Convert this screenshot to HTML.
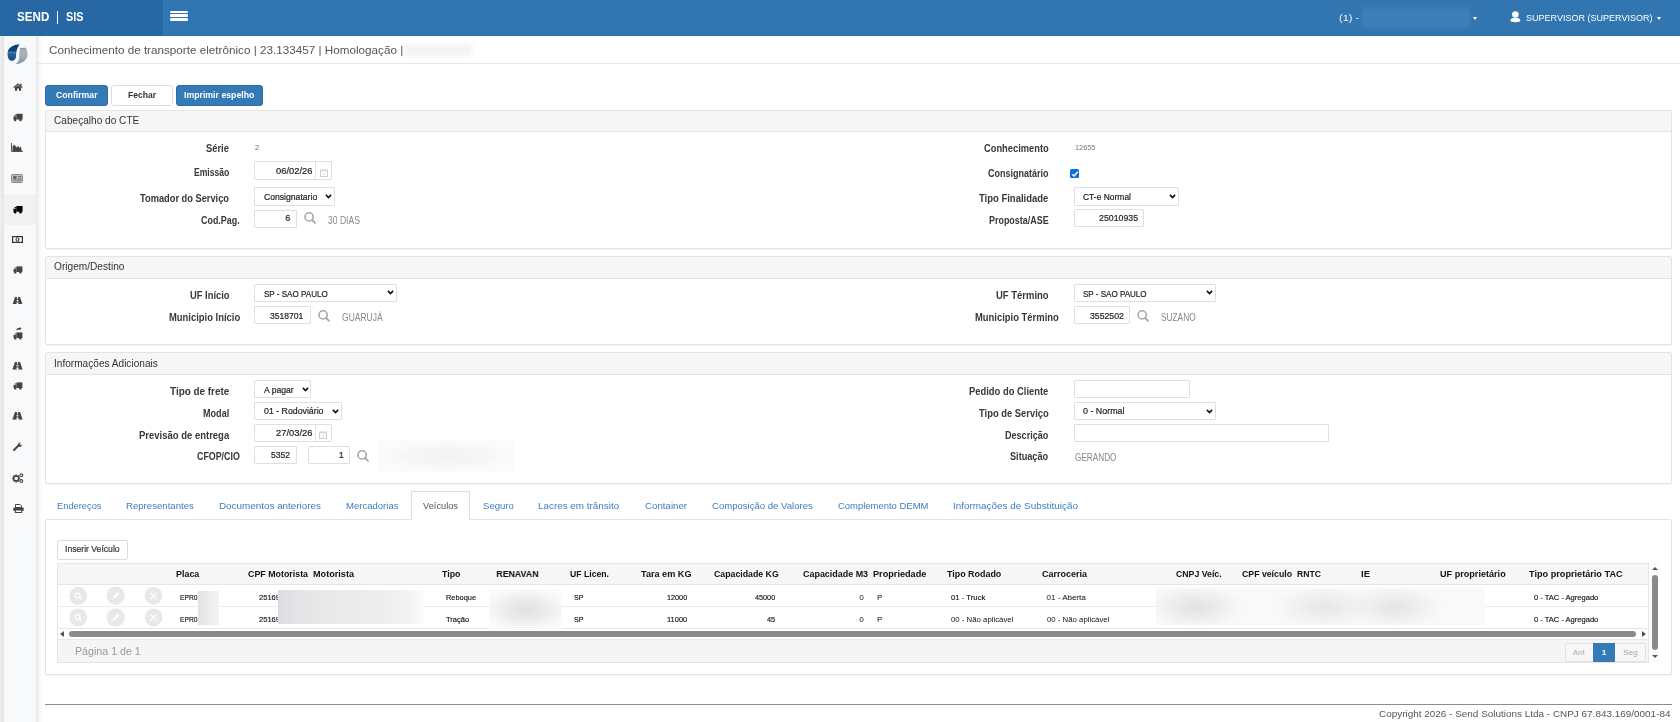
<!DOCTYPE html>
<html><head><meta charset="utf-8"><title>CT-e</title>
<style>
html,body{margin:0;padding:0;width:1680px;height:722px;overflow:hidden;background:#fff;font-family:"Liberation Sans",sans-serif;}
body{position:relative;}
.t{position:absolute;white-space:nowrap;line-height:1;transform-origin:0 0;}
.a{position:absolute;box-sizing:border-box;}
.hdrL{left:0;top:0;width:163px;height:36px;background:#2767a4;}
.hdrR{left:163px;top:0;width:1517px;height:36px;background:#3276b1;}
.sideStrip{left:0;top:36px;width:4px;height:686px;background:linear-gradient(to right,#f0f0f0,#e3e3e3);}
.side{left:4px;top:36px;width:32px;height:686px;background:#f8f9fb;}
.sideSh{left:36px;top:36px;width:8px;height:686px;background:linear-gradient(to right,#e4e4e4,#f3f3f3 25%,#fbfbfb 60%,rgba(255,255,255,0));}
.titlebar{left:36px;top:36px;width:1644px;height:28px;background:#fff;border-bottom:1px solid #e8e8e8;}
.btnP{background:#337ab7;border:1px solid #2e6da4;border-radius:3px;}
.btnD{background:#fff;border:1px solid #ddd;border-radius:3px;}
.panel{border:1px solid #e3e3e3;background:#fff;border-radius:2px;box-shadow:0 1px 1px rgba(0,0,0,.04);}
.ph{background:#f6f6f6;border-bottom:1px solid #e3e3e3;}
.inp{background:#fff;border:1px solid #dfdfdf;border-radius:1px;}
.sel{background:#fff;border:1px solid #dfdfdf;border-radius:1px;}
.chev{position:absolute;width:5px;height:5px;border-right:1.6px solid #222;border-bottom:1.6px solid #222;transform:rotate(45deg);}
.hdrS{left:0;top:36px;width:1680px;height:2px;background:linear-gradient(rgba(40,80,130,.12),rgba(40,80,130,0));}

</style></head><body>
<svg width="0" height="0" style="position:absolute">
<defs>
<symbol id="srch" viewBox="0 0 12 12"><circle cx="5.1" cy="4.9" r="4.1" stroke="#aaa6aa" stroke-width="1.6" fill="none"/><path d="M8.1 8 L11 10.9" stroke="#aaa6aa" stroke-width="1.8" stroke-linecap="round"/></symbol>
<symbol id="chev" viewBox="0 0 7 5"><path d="M0.9 0.9 L3.5 3.6 L6.1 0.9" stroke="#111" stroke-width="1.6" fill="none"/></symbol>
<symbol id="cal" viewBox="0 0 8 8"><rect x="0.5" y="1.3" width="7" height="6.2" stroke="#cfcfcf" stroke-width="1" fill="none"/><rect x="0.5" y="0.6" width="7" height="1.8" fill="#d6d6d6"/><rect x="3.3" y="4" width="1.4" height="1.4" fill="#d6d6d6"/></symbol>
<symbol id="truck" viewBox="0 0 12 10"><path d="M4 0.5 H11.5 V7.5 H4 Z" /><path d="M0.5 4 L2 1.8 H4 V7.5 H0.5 Z"/><circle cx="2.5" cy="8" r="1.5"/><circle cx="9" cy="8" r="1.5"/><rect x="1.3" y="2.6" width="1.6" height="1.3" fill="#f9fafb"/></symbol>
<symbol id="road" viewBox="0 0 12 9"><path d="M3 0 H5.3 V2 H6.7 V0 H9 L12 9 H7.2 V6.5 H4.8 V9 H0 Z M5 3.2 V5.3 H7 V3.2 Z"/></symbol>
</defs>
</svg>
<div class="a hdrL"></div>
<div class="a hdrR"></div>
<div class="a hdrS"></div>
<div class="a" style="left:56.6px;top:11.2px;width:1.8px;height:12.6px;background:#fff"></div>
<!-- hamburger -->
<div class="a" style="left:170px;top:10.5px;width:18px;height:2.6px;background:#fff;border-radius:1px"></div>
<div class="a" style="left:170px;top:14.3px;width:18px;height:2.6px;background:#fff;border-radius:1px"></div>
<div class="a" style="left:170px;top:18.1px;width:18px;height:2.6px;background:#fff;border-radius:1px"></div>
<!-- header blurred box -->
<div class="a" style="left:1362px;top:8px;width:108px;height:20px;background:#3f7fb8;filter:blur(2px)"></div>
<div class="a" style="left:1472.5px;top:17px;width:0;height:0;border-left:2.5px solid transparent;border-right:2.5px solid transparent;border-top:3px solid #fff"></div>
<div class="a" style="left:1656.8px;top:17px;width:0;height:0;border-left:2.6px solid transparent;border-right:2.6px solid transparent;border-top:3px solid #fff"></div>
<!-- user icon -->
<svg class="a" style="left:1509px;top:11px" width="13" height="12" viewBox="0 0 13 12"><circle cx="6.4" cy="3.5" r="3.3" fill="#fff"/><path d="M1.4 9.6 C1.4 7.6 3.5 7 6.4 7 C9.3 7 11.4 7.6 11.4 9.6 C11.4 10.9 9.5 11.2 6.4 11.2 C3.3 11.2 1.4 10.9 1.4 9.6 Z" fill="#fff"/></svg>

<!-- sidebar -->
<div class="a sideStrip"></div>
<div class="a side"></div>
<div class="a" style="left:4px;top:193.5px;width:32px;height:31px;background:#f2f2f2"></div>

<!-- title bar -->
<div class="a titlebar"></div>
<div class="a" style="left:404px;top:44px;width:68px;height:12px;background:#f3f3f3;filter:blur(2px)"></div>

<div class="a sideSh"></div>
<div class="a" style="left:36px;top:63px;width:9px;height:1px;background:#e6e6e6"></div>
<!-- buttons -->
<div class="a btnP" style="left:45px;top:84.5px;width:63px;height:21.5px"></div>
<div class="a btnD" style="left:110.5px;top:84.5px;width:62.5px;height:21.5px"></div>
<div class="a btnP" style="left:176px;top:84.5px;width:86.5px;height:21.5px"></div>

<!-- panel 1 -->
<div class="a panel" style="left:45px;top:110px;width:1627px;height:139px"></div>
<div class="a ph" style="left:46px;top:111px;width:1625px;height:21px"></div>
<!-- panel 2 -->
<div class="a panel" style="left:45px;top:256px;width:1627px;height:89px"></div>
<div class="a ph" style="left:46px;top:257px;width:1625px;height:22px"></div>
<!-- panel 3 -->
<div class="a panel" style="left:45px;top:352px;width:1627px;height:132px"></div>
<div class="a ph" style="left:46px;top:353px;width:1625px;height:22px"></div>

<!-- panel1 inputs -->
<div class="a inp" style="left:254px;top:161px;width:78px;height:19px"></div>
<div class="a" style="left:314.5px;top:162px;width:1px;height:17px;background:#e2e2e2"></div>
<div class="a sel" style="left:254px;top:187px;width:80.5px;height:18.5px"></div>
<div class="a inp" style="left:254px;top:209.5px;width:42.5px;height:18px"></div>
<div class="a sel" style="left:1074px;top:187px;width:104.5px;height:18.5px"></div>
<div class="a inp" style="left:1074px;top:209px;width:70px;height:18px"></div>
<!-- checkbox -->
<div class="a" style="left:1070px;top:169px;width:9.2px;height:9.3px;background:#0b6fd6;border-radius:1.5px"></div>
<svg class="a" style="left:1070px;top:169px" width="10" height="10" viewBox="0 0 10 10"><path d="M2.2 5.2 L4.1 7 L7.8 2.8" stroke="#fff" stroke-width="1.4" fill="none"/></svg>

<!-- panel2 inputs -->
<div class="a sel" style="left:254px;top:284px;width:143px;height:17.5px"></div>
<div class="a inp" style="left:254px;top:306px;width:57px;height:18px"></div>
<div class="a sel" style="left:1074px;top:284px;width:142px;height:17.5px"></div>
<div class="a inp" style="left:1074px;top:306px;width:56px;height:18px"></div>

<!-- panel3 inputs -->
<div class="a sel" style="left:254px;top:380px;width:57px;height:18px"></div>
<div class="a sel" style="left:254px;top:401.5px;width:87.5px;height:18px"></div>
<div class="a inp" style="left:254px;top:423.5px;width:77.5px;height:18px"></div>
<div class="a" style="left:314.5px;top:424.5px;width:1px;height:16px;background:#e2e2e2"></div>
<div class="a inp" style="left:254px;top:445.5px;width:43px;height:18px"></div>
<div class="a inp" style="left:308px;top:445.5px;width:42px;height:18px"></div>
<div class="a" style="left:378px;top:440px;width:137px;height:32px;background:radial-gradient(ellipse 50% 45% at 50% 50%,#f3f3f3,#f6f6f6 60%,#fbfbfb 100%)"></div>
<div class="a inp" style="left:1074px;top:380px;width:116px;height:18px"></div>
<div class="a sel" style="left:1074px;top:401.5px;width:141.5px;height:18px"></div>
<div class="a inp" style="left:1074px;top:423.5px;width:255px;height:18px"></div>

<!-- tabs -->
<div class="a" style="left:411px;top:491px;width:59px;height:29px;background:#fff;border:1px solid #ddd;border-bottom:none"></div>
<div class="a panel" style="left:45px;top:519px;width:1627px;height:156px;border-color:#e3e3e3"></div>
<div class="a" style="left:412px;top:518px;width:57px;height:2px;background:#fff"></div>

<!-- inserir -->
<div class="a btnD" style="left:57px;top:539.5px;width:70.5px;height:20px;border-color:#dcdcdc;border-radius:2px"></div>

<!-- grid -->
<div class="a" style="left:57px;top:563px;width:1592px;height:100px;border:1px solid #e5e5e5;background:#fff"></div>
<div class="a" style="left:58px;top:564px;width:1590px;height:20.5px;background:#f6f6f6;border-bottom:1px solid #e5e5e5"></div>
<div class="a" style="left:58px;top:606px;width:1590px;height:1px;background:#ececec"></div>
<div class="a" style="left:58px;top:628px;width:1590px;height:1px;background:#e5e5e5"></div>
<!-- h scrollbar -->
<div class="a" style="left:58px;top:629px;width:1590px;height:9px;background:#fff"></div>
<div class="a" style="left:68.6px;top:631px;width:1567.4px;height:6px;background:#8a8a8a;border-radius:3px"></div>
<div class="a" style="left:60px;top:631px;width:0;height:0;border-top:3px solid transparent;border-bottom:3px solid transparent;border-right:4px solid #555"></div>
<div class="a" style="left:1641.5px;top:631px;width:0;height:0;border-top:3px solid transparent;border-bottom:3px solid transparent;border-left:4px solid #555"></div>
<!-- pager -->
<div class="a" style="left:58px;top:638.5px;width:1590px;height:24.5px;background:#f5f5f5;border-top:1px solid #e8e8e8;border-bottom:1px solid #e3e3e3"></div>
<div class="a" style="left:1564.5px;top:643px;width:81px;height:18.6px;border:1px solid #e3e3e3;border-radius:2px;background:#f7f7f7"></div>
<div class="a" style="left:1593px;top:643px;width:22.2px;height:18.6px;background:#337ab7"></div>
<!-- v scrollbar -->
<div class="a" style="left:1650px;top:563px;width:9px;height:100px;background:#fbfbfb"></div>
<div class="a" style="left:1651.8px;top:574.6px;width:6px;height:75.4px;background:#8a8a8a;border-radius:3px"></div>
<div class="a" style="left:1651.8px;top:566.5px;width:0;height:0;border-left:3px solid transparent;border-right:3px solid transparent;border-bottom:3.8px solid #555"></div>
<div class="a" style="left:1651.8px;top:655px;width:0;height:0;border-left:3px solid transparent;border-right:3px solid transparent;border-top:3.8px solid #555"></div>

<!-- footer -->
<div class="a" style="left:45px;top:704px;width:1627px;height:1px;background:#8d8d8d"></div>
<!-- logo -->
<svg class="a" style="left:6px;top:42.5px" width="23" height="22" viewBox="0 0 23 22">
<defs>
<linearGradient id="lgB" x1="0" y1="0" x2="0" y2="1"><stop offset="0" stop-color="#023b72"/><stop offset="0.4" stop-color="#0d4a85"/><stop offset="0.5" stop-color="#4a77a3"/><stop offset="0.6" stop-color="#2b6198"/><stop offset="1" stop-color="#0b4f8d"/></linearGradient>
<linearGradient id="lgG" x1="0" y1="0" x2="0" y2="1"><stop offset="0" stop-color="#7b8893"/><stop offset="0.12" stop-color="#a9b5bd"/><stop offset="0.6" stop-color="#a2aeb7"/><stop offset="1" stop-color="#7e8e9a"/></linearGradient>
</defs>
<path d="M13.5 1.2 C8 1.5 1.5 4.5 1.5 10.5 C1.5 15 3 17.8 6 17.8 C8 17.8 9.8 16.5 10 13.8 C10.2 10 10.3 6 13.5 1.2 Z" fill="url(#lgB)"/>
<path d="M14 5 L19.5 4.8 C21 6.5 21.5 9 21.5 11.5 C21.5 17 16 21 9.6 20.9 C12 19.5 13 17.5 13.2 15 C13.4 11.5 13.4 8 14 5 Z" fill="url(#lgG)"/>
</svg>
<!-- sidebar icons -->
<svg class="a" style="left:13px;top:83px" width="10" height="8" viewBox="0 0 10 8"><path d="M5 0.2 L9.8 4.3 L8.9 5.1 L5 1.8 L1.1 5.1 L0.2 4.3 Z" fill="#444"/><path d="M1.9 4.6 L5 2.2 L8.1 4.6 V7.8 H5.9 V5.6 H4.1 V7.8 H1.9 Z" fill="#444"/><rect x="7.2" y="0.6" width="1.3" height="2.4" fill="#444"/></svg>
<svg class="a" style="left:12.8px;top:113.2px;fill:#444" width="10" height="9"><use href="#truck"/></svg>
<svg class="a" style="left:11px;top:143px" width="12" height="9" viewBox="0 0 12 9"><path d="M0.5 0 V8.5 H11.8" stroke="#555" stroke-width="1" fill="none"/><path d="M1.5 8 V3.5 L3.2 1.5 L5.5 4.5 L7.2 3 L8.8 5 L9.8 3.2 L10.8 8 Z" fill="#444"/></svg>
<svg class="a" style="left:11px;top:174px" width="12" height="9" viewBox="0 0 12 9"><rect x="0.5" y="0.5" width="11" height="8" rx="1" fill="#bdbdbd" stroke="#777" stroke-width="0.8"/><rect x="2.3" y="2" width="3.2" height="3.5" fill="#666"/><rect x="6.8" y="2" width="3.5" height="1.3" fill="#777"/><rect x="6.8" y="4.5" width="3.5" height="1.3" fill="#777"/><rect x="2.3" y="6.3" width="8" height="1" fill="#888"/></svg>
<svg class="a" style="left:12.5px;top:204.5px;fill:#000" width="10" height="9.5"><use href="#truck"/></svg>
<svg class="a" style="left:12px;top:236px" width="11" height="7" viewBox="0 0 11 7"><rect x="0.6" y="0.6" width="9.8" height="5.8" stroke="#333" stroke-width="1.2" fill="#fff"/><ellipse cx="5.5" cy="3.5" rx="2" ry="2.3" fill="#333"/><ellipse cx="5.5" cy="3.5" rx="0.8" ry="1.4" fill="#fff"/><path d="M0.6 0.6 L2 0.6 L0.6 2 Z M10.4 0.6 L9 0.6 L10.4 2 Z M0.6 6.4 L2 6.4 L0.6 5 Z M10.4 6.4 L9 6.4 L10.4 5 Z" fill="#333"/></svg>
<svg class="a" style="left:13px;top:266px;fill:#444" width="10" height="8"><use href="#truck"/></svg>
<svg class="a" style="left:12px;top:296.5px;fill:#444" width="11" height="7.5"><use href="#road"/></svg>
<svg class="a" style="left:13px;top:326.5px" width="10" height="4" viewBox="0 0 10 4"><path d="M3 3.5 C3.5 1.5 5 0.8 6.5 0.8 V0 L8.5 1.6 L6.5 3.2 V2.4 C5.3 2.4 4.2 2.8 3 3.5 Z" fill="#444"/></svg>
<svg class="a" style="left:13px;top:332px;fill:#444" width="10" height="8"><use href="#truck"/></svg>
<svg class="a" style="left:12px;top:362px;fill:#444" width="11" height="7.7"><use href="#road"/></svg>
<svg class="a" style="left:13px;top:382px;fill:#444" width="10" height="8"><use href="#truck"/></svg>
<svg class="a" style="left:12px;top:412px;fill:#444" width="11" height="7.7"><use href="#road"/></svg>
<svg class="a" style="left:12.5px;top:442px" width="10" height="9" viewBox="0 0 10 9"><path d="M1 8 L5.5 3.5" stroke="#444" stroke-width="2" stroke-linecap="round"/><path d="M5 3.8 C4.5 2 5.8 0.3 7.8 0.5 L6.6 1.9 L7.3 2.9 L8.7 2.2 C9 4 7.5 5.3 5.8 4.8 Z" fill="#444"/></svg>
<svg class="a" style="left:11.5px;top:472.5px" width="12" height="10" viewBox="0 0 12 10"><circle cx="4.2" cy="5.5" r="2.6" stroke="#444" stroke-width="1.6" fill="none"/><g stroke="#444" stroke-width="1.4"><path d="M4.2 1.6 V2.4 M4.2 8.6 V9.4 M0.3 5.5 H1.1 M7.3 5.5 H8.1 M1.5 2.8 L2.1 3.4 M6.3 7.6 L6.9 8.2 M1.5 8.2 L2.1 7.6 M6.3 3.4 L6.9 2.8"/></g><circle cx="9.3" cy="2.3" r="1.4" stroke="#444" stroke-width="1.1" fill="none"/><circle cx="9.3" cy="8" r="1.4" stroke="#444" stroke-width="1.1" fill="none"/></svg>
<svg class="a" style="left:12.5px;top:503.5px" width="11" height="9" viewBox="0 0 11 9"><path d="M2.5 0.5 H7 L8.5 2 V3.5 H2.5 Z" stroke="#444" stroke-width="1" fill="#fff"/><rect x="0.3" y="3.5" width="10.4" height="3.6" rx="1" fill="#444"/><rect x="2.3" y="6" width="6.4" height="2.5" stroke="#444" stroke-width="1" fill="#fff"/></svg>

<!-- select chevrons -->
<svg class="a" style="left:324.8px;top:193.8px" width="7" height="5"><use href="#chev"/></svg>
<svg class="a" style="left:1168.8px;top:193.8px" width="7" height="5"><use href="#chev"/></svg>
<svg class="a" style="left:386.6px;top:290.4px" width="7" height="5"><use href="#chev"/></svg>
<svg class="a" style="left:1206.2px;top:290.4px" width="7" height="5"><use href="#chev"/></svg>
<svg class="a" style="left:301.6px;top:387px" width="7" height="5"><use href="#chev"/></svg>
<svg class="a" style="left:332px;top:409px" width="7" height="5"><use href="#chev"/></svg>
<svg class="a" style="left:1205.6px;top:409px" width="7" height="5"><use href="#chev"/></svg>
<!-- search icons -->
<svg class="a" style="left:303.8px;top:212.4px" width="12" height="12"><use href="#srch"/></svg>
<svg class="a" style="left:317.8px;top:310.4px" width="12" height="12"><use href="#srch"/></svg>
<svg class="a" style="left:1137.4px;top:310.4px" width="12" height="12"><use href="#srch"/></svg>
<svg class="a" style="left:357.2px;top:449.5px" width="12" height="12"><use href="#srch"/></svg>
<!-- calendar icons -->
<svg class="a" style="left:319.5px;top:168.5px" width="8" height="8"><use href="#cal"/></svg>
<svg class="a" style="left:319.3px;top:430.8px" width="8" height="8"><use href="#cal"/></svg>

<!-- grid action circles -->
<svg class="a" style="left:60px;top:586px" width="110" height="42" viewBox="60 586 110 42">
<g fill="#e8e8e8"><circle cx="78.2" cy="595.8" r="9"/><circle cx="115.6" cy="595.8" r="9.2"/><circle cx="153.6" cy="595.8" r="8.9"/><circle cx="78.2" cy="617.5" r="9"/><circle cx="115.6" cy="617.5" r="9.2"/><circle cx="153.6" cy="617.5" r="8.9"/></g>
<g stroke="#fff" fill="none">
<circle cx="77.6" cy="595.4" r="2.4" stroke-width="1.2"/><path d="M79.4 597.3 L81.5 599.2" stroke-width="1.4"/>
<path d="M113.6 597.9 L118.6 592.9" stroke-width="2.6"/><path d="M111.6 599.9 L112.6 598.9" stroke-width="1.6"/>
<path d="M150.2 592.4 L156.8 599.1 M156.8 592.4 L150.2 599.1" stroke-width="1.3"/>
<circle cx="77.6" cy="617.1" r="2.4" stroke-width="1.2"/><path d="M79.4 619 L81.5 620.9" stroke-width="1.4"/>
<path d="M113.6 619.6 L118.6 614.6" stroke-width="2.6"/><path d="M111.6 621.6 L112.6 620.6" stroke-width="1.6"/>
<path d="M150.2 614.1 L156.8 620.8 M156.8 614.1 L150.2 620.8" stroke-width="1.3"/>
</g>
</svg>

<div class="t" style="left:16.70px;top:10.00px;font-size:13.5px;color:#fff;font-weight:700;transform:scaleX(0.8610);">SEND</div>
<div class="t" style="left:65.50px;top:10.00px;font-size:13.5px;color:#fff;font-weight:700;transform:scaleX(0.8086);">SIS</div>
<div class="t" style="left:1339.30px;top:13.00px;font-size:9.5px;color:#eef3f8;transform:scaleX(1.1652);">(1) -</div>
<div class="t" style="left:1526.00px;top:13.00px;font-size:9.5px;color:#fff;transform:scaleX(0.9496);">SUPERVISOR (SUPERVISOR)</div>
<div class="t" style="left:48.80px;top:45.00px;font-size:11px;color:#555;transform:scaleX(1.0627);">Conhecimento de transporte eletrônico | 23.133457 | Homologação |</div>
<div class="t" style="left:55.50px;top:90.00px;font-size:9.5px;color:#fff;font-weight:700;transform:scaleX(0.9162);">Confirmar</div>
<div class="t" style="left:127.70px;top:90.00px;font-size:9.5px;color:#333;font-weight:700;transform:scaleX(0.8987);">Fechar</div>
<div class="t" style="left:183.90px;top:90.00px;font-size:9.5px;color:#fff;font-weight:700;transform:scaleX(0.9195);">Imprimir espelho</div>
<div class="t" style="left:54.20px;top:116.00px;font-size:10px;color:#333;transform:scaleX(1.0095);">Cabeçalho do CTE</div>
<div class="t" style="left:54.20px;top:262.00px;font-size:10px;color:#333;transform:scaleX(1.0134);">Origem/Destino</div>
<div class="t" style="left:54.00px;top:359.00px;font-size:10px;color:#333;transform:scaleX(1.0093);">Informações Adicionais</div>
<div class="t" style="left:205.90px;top:144.00px;font-size:10px;color:#383838;font-weight:700;transform:scaleX(0.9359);">Série</div>
<div class="t" style="left:193.50px;top:168.00px;font-size:10px;color:#383838;font-weight:700;transform:scaleX(0.8580);">Emissão</div>
<div class="t" style="left:139.80px;top:194.00px;font-size:10px;color:#383838;font-weight:700;transform:scaleX(0.9275);">Tomador do Serviço</div>
<div class="t" style="left:200.50px;top:216.00px;font-size:10px;color:#383838;font-weight:700;transform:scaleX(0.8929);">Cod.Pag.</div>
<div class="t" style="left:983.50px;top:144.00px;font-size:10px;color:#383838;font-weight:700;transform:scaleX(0.9316);">Conhecimento</div>
<div class="t" style="left:987.60px;top:169.00px;font-size:10px;color:#383838;font-weight:700;transform:scaleX(0.9013);">Consignatário</div>
<div class="t" style="left:978.90px;top:194.00px;font-size:10px;color:#383838;font-weight:700;transform:scaleX(0.9473);">Tipo Finalidade</div>
<div class="t" style="left:988.60px;top:216.00px;font-size:10px;color:#383838;font-weight:700;transform:scaleX(0.8937);">Proposta/ASE</div>
<div class="t" style="left:189.50px;top:291.00px;font-size:10px;color:#383838;font-weight:700;transform:scaleX(0.9353);">UF Início</div>
<div class="t" style="left:168.60px;top:313.00px;font-size:10px;color:#383838;font-weight:700;transform:scaleX(0.9423);">Municipio Início</div>
<div class="t" style="left:995.60px;top:291.00px;font-size:10px;color:#383838;font-weight:700;transform:scaleX(0.9467);">UF Término</div>
<div class="t" style="left:975.20px;top:313.00px;font-size:10px;color:#383838;font-weight:700;transform:scaleX(0.9427);">Municipio Término</div>
<div class="t" style="left:169.50px;top:387.00px;font-size:10px;color:#383838;font-weight:700;transform:scaleX(0.9912);">Tipo de frete</div>
<div class="t" style="left:202.60px;top:409.00px;font-size:10px;color:#383838;font-weight:700;transform:scaleX(0.9069);">Modal</div>
<div class="t" style="left:138.60px;top:431.00px;font-size:10px;color:#383838;font-weight:700;transform:scaleX(0.9490);">Previsão de entrega</div>
<div class="t" style="left:196.70px;top:452.00px;font-size:10px;color:#383838;font-weight:700;transform:scaleX(0.8853);">CFOP/CIO</div>
<div class="t" style="left:969.00px;top:387.00px;font-size:10px;color:#383838;font-weight:700;transform:scaleX(0.9390);">Pedido do Cliente</div>
<div class="t" style="left:978.60px;top:409.00px;font-size:10px;color:#383838;font-weight:700;transform:scaleX(0.9381);">Tipo de Serviço</div>
<div class="t" style="left:1005.00px;top:431.00px;font-size:10px;color:#383838;font-weight:700;transform:scaleX(0.9056);">Descrição</div>
<div class="t" style="left:1010.20px;top:452.00px;font-size:10px;color:#383838;font-weight:700;transform:scaleX(0.9139);">Situação</div>
<div class="t" style="left:254.70px;top:144.00px;font-size:8px;color:#777;">2</div>
<div class="t" style="left:1074.60px;top:144.00px;font-size:8px;color:#777;transform:scaleX(0.9169);">12655</div>
<div class="t" style="left:276.00px;top:167.00px;font-size:9px;color:#1e1e1e;-webkit-text-stroke:0.2px #1e1e1e;transform:scaleX(1.0386);">06/02/26</div>
<div class="t" style="left:263.70px;top:193.00px;font-size:9px;color:#1e1e1e;-webkit-text-stroke:0.2px #1e1e1e;transform:scaleX(0.9577);">Consignatario</div>
<div class="t" style="left:285.28px;top:214.00px;font-size:9px;color:#1e1e1e;-webkit-text-stroke:0.2px #1e1e1e;">6</div>
<div class="t" style="left:327.70px;top:215.00px;font-size:11px;color:#888;transform:scaleX(0.7786);">30 DIAS</div>
<div class="t" style="left:1083.40px;top:193.00px;font-size:9px;color:#1e1e1e;-webkit-text-stroke:0.2px #1e1e1e;transform:scaleX(0.9409);">CT-e Normal</div>
<div class="t" style="left:1098.90px;top:214.00px;font-size:9px;color:#1e1e1e;-webkit-text-stroke:0.2px #1e1e1e;transform:scaleX(0.9764);">25010935</div>
<div class="t" style="left:263.50px;top:290.00px;font-size:9px;color:#1e1e1e;-webkit-text-stroke:0.2px #1e1e1e;transform:scaleX(0.8946);">SP - SAO PAULO</div>
<div class="t" style="left:270.30px;top:312.00px;font-size:9px;color:#1e1e1e;-webkit-text-stroke:0.2px #1e1e1e;transform:scaleX(0.9530);">3518701</div>
<div class="t" style="left:341.50px;top:312.00px;font-size:11px;color:#888;transform:scaleX(0.7743);">GUARUJÁ</div>
<div class="t" style="left:1083.40px;top:290.00px;font-size:9px;color:#1e1e1e;-webkit-text-stroke:0.2px #1e1e1e;transform:scaleX(0.8932);">SP - SAO PAULO</div>
<div class="t" style="left:1090.00px;top:312.00px;font-size:9px;color:#1e1e1e;-webkit-text-stroke:0.2px #1e1e1e;transform:scaleX(0.9644);">3552502</div>
<div class="t" style="left:1161.00px;top:312.00px;font-size:11px;color:#888;transform:scaleX(0.7547);">SUZANO</div>
<div class="t" style="left:263.60px;top:386.00px;font-size:9px;color:#1e1e1e;-webkit-text-stroke:0.2px #1e1e1e;transform:scaleX(0.9571);">A pagar</div>
<div class="t" style="left:263.60px;top:407.00px;font-size:9px;color:#1e1e1e;-webkit-text-stroke:0.2px #1e1e1e;transform:scaleX(0.9749);">01 - Rodoviário</div>
<div class="t" style="left:276.00px;top:429.00px;font-size:9px;color:#1e1e1e;-webkit-text-stroke:0.2px #1e1e1e;transform:scaleX(1.0386);">27/03/26</div>
<div class="t" style="left:271.20px;top:451.00px;font-size:9px;color:#1e1e1e;-webkit-text-stroke:0.2px #1e1e1e;transform:scaleX(0.9485);">5352</div>
<div class="t" style="left:338.78px;top:451.00px;font-size:9px;color:#1e1e1e;-webkit-text-stroke:0.2px #1e1e1e;">1</div>
<div class="t" style="left:1083.30px;top:407.00px;font-size:9px;color:#1e1e1e;-webkit-text-stroke:0.2px #1e1e1e;transform:scaleX(0.9877);">0 - Normal</div>
<div class="t" style="left:1074.50px;top:452.00px;font-size:11px;color:#888;transform:scaleX(0.7461);">GERANDO</div>
<div class="t" style="left:57.00px;top:502.00px;font-size:9px;color:#3d7ebf;transform:scaleX(1.0341);">Endereços</div>
<div class="t" style="left:126.40px;top:502.00px;font-size:9px;color:#3d7ebf;transform:scaleX(1.0669);">Representantes</div>
<div class="t" style="left:218.70px;top:502.00px;font-size:9px;color:#3d7ebf;transform:scaleX(1.0962);">Documentos anteriores</div>
<div class="t" style="left:345.50px;top:502.00px;font-size:9px;color:#3d7ebf;transform:scaleX(1.0599);">Mercadorias</div>
<div class="t" style="left:482.70px;top:502.00px;font-size:9px;color:#3d7ebf;transform:scaleX(1.0644);">Seguro</div>
<div class="t" style="left:538.40px;top:502.00px;font-size:9px;color:#3d7ebf;transform:scaleX(1.0968);">Lacres em trânsito</div>
<div class="t" style="left:644.60px;top:502.00px;font-size:9px;color:#3d7ebf;transform:scaleX(1.0786);">Container</div>
<div class="t" style="left:711.70px;top:502.00px;font-size:9px;color:#3d7ebf;transform:scaleX(1.0623);">Composição de Valores</div>
<div class="t" style="left:837.50px;top:502.00px;font-size:9px;color:#3d7ebf;transform:scaleX(1.0508);">Complemento DEMM</div>
<div class="t" style="left:952.90px;top:502.00px;font-size:9px;color:#3d7ebf;transform:scaleX(1.1006);">Informações de Substituição</div>
<div class="t" style="left:422.90px;top:502.00px;font-size:9px;color:#555;transform:scaleX(1.0285);">Veículos</div>
<div class="t" style="left:64.80px;top:544.00px;font-size:9.5px;color:#333;-webkit-text-stroke:0.2px #333;transform:scaleX(0.9069);">Inserir Veículo</div>
<div class="t" style="left:175.70px;top:570.00px;font-size:8.8px;color:#111;font-weight:700;transform:scaleX(1.0130);">Placa</div>
<div class="t" style="left:247.50px;top:570.00px;font-size:8.8px;color:#111;font-weight:700;transform:scaleX(1.0063);">CPF Motorista</div>
<div class="t" style="left:313.30px;top:570.00px;font-size:8.8px;color:#111;font-weight:700;transform:scaleX(1.0355);">Motorista</div>
<div class="t" style="left:441.50px;top:570.00px;font-size:8.8px;color:#111;font-weight:700;transform:scaleX(1.0051);">Tipo</div>
<div class="t" style="left:496.30px;top:570.00px;font-size:8.8px;color:#111;font-weight:700;">RENAVAN</div>
<div class="t" style="left:570.00px;top:570.00px;font-size:8.8px;color:#111;font-weight:700;transform:scaleX(0.9850);">UF Licen.</div>
<div class="t" style="left:640.90px;top:570.00px;font-size:8.8px;color:#111;font-weight:700;transform:scaleX(1.0362);">Tara em KG</div>
<div class="t" style="left:714.30px;top:570.00px;font-size:8.8px;color:#111;font-weight:700;transform:scaleX(0.9949);">Capacidade KG</div>
<div class="t" style="left:802.90px;top:570.00px;font-size:8.8px;color:#111;font-weight:700;transform:scaleX(1.0164);">Capacidade M3</div>
<div class="t" style="left:872.90px;top:570.00px;font-size:8.8px;color:#111;font-weight:700;transform:scaleX(1.0400);">Propriedade</div>
<div class="t" style="left:946.60px;top:570.00px;font-size:8.8px;color:#111;font-weight:700;transform:scaleX(1.0132);">Tipo Rodado</div>
<div class="t" style="left:1042.30px;top:570.00px;font-size:8.8px;color:#111;font-weight:700;transform:scaleX(1.0246);">Carroceria</div>
<div class="t" style="left:1176.40px;top:570.00px;font-size:8.8px;color:#111;font-weight:700;transform:scaleX(0.9920);">CNPJ Veíc.</div>
<div class="t" style="left:1241.80px;top:570.00px;font-size:8.8px;color:#111;font-weight:700;transform:scaleX(0.9929);">CPF veículo</div>
<div class="t" style="left:1297.00px;top:570.00px;font-size:8.8px;color:#111;font-weight:700;transform:scaleX(0.9821);">RNTC</div>
<div class="t" style="left:1361.00px;top:570.00px;font-size:8.8px;color:#111;font-weight:700;transform:scaleX(1.0827);">IE</div>
<div class="t" style="left:1440.00px;top:570.00px;font-size:8.8px;color:#111;font-weight:700;transform:scaleX(1.0339);">UF proprietário</div>
<div class="t" style="left:1529.30px;top:570.00px;font-size:8.8px;color:#111;font-weight:700;transform:scaleX(1.0389);">Tipo proprietário TAC</div>
<div class="t" style="left:179.80px;top:594.00px;font-size:8px;color:#111;-webkit-text-stroke:0.15px #111;transform:scaleX(0.8371);">EPR0</div>
<div class="t" style="left:258.80px;top:594.00px;font-size:8px;color:#111;-webkit-text-stroke:0.15px #111;transform:scaleX(0.9438);">25169</div>
<div class="t" style="left:445.50px;top:594.00px;font-size:8px;color:#111;-webkit-text-stroke:0.15px #111;transform:scaleX(0.9235);">Reboque</div>
<div class="t" style="left:574.30px;top:594.00px;font-size:8px;color:#111;-webkit-text-stroke:0.15px #111;transform:scaleX(0.8902);">SP</div>
<div class="t" style="left:666.80px;top:594.00px;font-size:8px;color:#111;-webkit-text-stroke:0.15px #111;transform:scaleX(0.9079);">12000</div>
<div class="t" style="left:754.80px;top:594.00px;font-size:8px;color:#111;-webkit-text-stroke:0.15px #111;transform:scaleX(0.9079);">45000</div>
<div class="t" style="left:859.25px;top:594.00px;font-size:8px;color:#111;">0</div>
<div class="t" style="left:877.00px;top:594.00px;font-size:8px;color:#111;">P</div>
<div class="t" style="left:950.60px;top:594.00px;font-size:8px;color:#111;-webkit-text-stroke:0.15px #111;transform:scaleX(0.9669);">01 - Truck</div>
<div class="t" style="left:1046.60px;top:594.00px;font-size:8px;color:#111;">01 - Aberta</div>
<div class="t" style="left:1533.60px;top:594.00px;font-size:8px;color:#111;-webkit-text-stroke:0.15px #111;transform:scaleX(0.9430);">0 - TAC - Agregado</div>
<div class="t" style="left:179.80px;top:616.00px;font-size:8px;color:#111;-webkit-text-stroke:0.15px #111;transform:scaleX(0.8371);">EPR0</div>
<div class="t" style="left:258.80px;top:616.00px;font-size:8px;color:#111;-webkit-text-stroke:0.15px #111;transform:scaleX(0.9438);">25169</div>
<div class="t" style="left:445.50px;top:616.00px;font-size:8px;color:#111;-webkit-text-stroke:0.15px #111;transform:scaleX(0.9468);">Tração</div>
<div class="t" style="left:574.30px;top:616.00px;font-size:8px;color:#111;-webkit-text-stroke:0.15px #111;transform:scaleX(0.8902);">SP</div>
<div class="t" style="left:666.80px;top:616.00px;font-size:8px;color:#111;-webkit-text-stroke:0.15px #111;transform:scaleX(0.9328);">11000</div>
<div class="t" style="left:766.90px;top:616.00px;font-size:8px;color:#111;-webkit-text-stroke:0.15px #111;transform:scaleX(0.9095);">45</div>
<div class="t" style="left:859.25px;top:616.00px;font-size:8px;color:#111;">0</div>
<div class="t" style="left:877.00px;top:616.00px;font-size:8px;color:#111;">P</div>
<div class="t" style="left:950.60px;top:616.00px;font-size:8px;color:#111;transform:scaleX(0.9743);">00 - Não aplicável</div>
<div class="t" style="left:1046.60px;top:616.00px;font-size:8px;color:#111;transform:scaleX(0.9743);">00 - Não aplicável</div>
<div class="t" style="left:1533.60px;top:616.00px;font-size:8px;color:#111;-webkit-text-stroke:0.15px #111;transform:scaleX(0.9430);">0 - TAC - Agregado</div>
<div class="t" style="left:74.80px;top:647.00px;font-size:10px;color:#999;transform:scaleX(1.0661);">Página 1 de 1</div>
<div class="t" style="left:1572.69px;top:649.00px;font-size:8px;color:#aaa;">Ant</div>
<div class="t" style="left:1601.87px;top:649.00px;font-size:8px;color:#fff;font-weight:700;">1</div>
<div class="t" style="left:1623.28px;top:649.00px;font-size:8px;color:#aaa;">Seg</div>
<div class="t" style="left:1379.00px;top:709.00px;font-size:9.5px;color:#555;transform:scaleX(1.0453);">Copyright 2026 - Send Solutions Ltda - CNPJ 67.843.169/0001-84</div>
<!-- blur boxes -->
<div class="a" style="left:197.7px;top:591.2px;width:21px;height:33.8px;background:linear-gradient(to right,#e2e2e4,#ebebec 50%,#f3f3f3)"></div>
<div class="a" style="left:278.3px;top:589.6px;width:145.5px;height:34.1px;background:linear-gradient(to right,#dcdce0 0%,#e4e4e7 12%,#eaeaea 40%,#ededed 70%,#f5f5f5 92%,#fbfbfb 100%)"></div>
<div class="a" style="left:488.7px;top:588.6px;width:73.3px;height:41px;background:radial-gradient(ellipse 60% 55% at 50% 50%,#e1e1e1 0%,#ebebeb 45%,#f6f6f6 80%,#fbfbfb 100%)"></div>
<div class="a" style="left:1156px;top:588.1px;width:328.7px;height:37.3px;background:radial-gradient(ellipse 48px 22px at 40px 19px,#e1e1e1,rgba(249,249,249,0)),radial-gradient(ellipse 50px 22px at 168px 19px,#e6e6e6,rgba(249,249,249,0)),radial-gradient(ellipse 48px 22px at 238px 19px,#e4e4e4,rgba(249,249,249,0)),linear-gradient(#f9f9f9,#f9f9f9)"></div>

</body></html>
